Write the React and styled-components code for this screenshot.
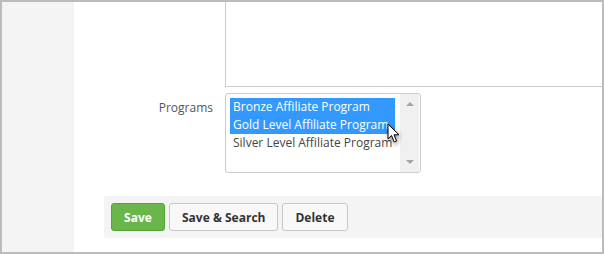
import React from 'react'
import styled, { createGlobalStyle } from 'styled-components'

const GlobalStyle = createGlobalStyle`
  html, body {
    margin: 0;
    padding: 0;
    background: #fff;
  }
  body {
    font-family: "Open Sans", "Liberation Sans", sans-serif;
  }
`

const Frame = styled.div`
  width: 604px;
  height: 254px;
  box-sizing: border-box;
  border: 2px solid #bcbcbc;
  display: flex;
  overflow: hidden;
`

const Sidebar = styled.div`
  width: 72px;
  flex: none;
  background: #f4f4f4;
`

const Main = styled.div`
  flex: 1;
  display: flex;
  flex-direction: column;
  background: #fff;
  min-width: 0;
`

const Row = styled.div`
  display: flex;
  margin-top: ${props => props.top || 0}px;
`

const Label = styled.div`
  width: 151px;
  flex: none;
  box-sizing: border-box;
  padding-right: 12px;
  padding-top: 6px;
  text-align: right;
  font-size: 12px;
  color: #555;
`

const TextArea = styled.div`
  flex: 1;
  height: 84px;
  border-left: 1px solid #cccccc;
  border-bottom: 1px solid #cccccc;
  margin-right: -4px;
`

const ListBox = styled.div`
  position: relative;
  width: 196px;
  height: 80px;
  box-sizing: border-box;
  border: 1px solid #cccccc;
  border-radius: 3px;
  display: flex;
  background: #fff;
`

const Options = styled.div`
  flex: 1;
  padding: 4px 0 0 4px;
  overflow: hidden;
`

const Option = styled.div`
  height: 18px;
  line-height: 18px;
  width: 165px;
  padding-left: 3px;
  box-sizing: border-box;
  font-size: 12px;
  white-space: nowrap;
  color: ${props => (props.selected ? '#fff' : '#444')};
  background: ${props => (props.selected ? '#3399ff' : 'transparent')};
`

const ScrollTrack = styled.div`
  width: 19px;
  flex: none;
  background: #f0f0f0;
  display: flex;
  flex-direction: column;
  justify-content: space-between;
  align-items: center;
  padding: 8px 0 8px;
  box-sizing: border-box;
  margin-right: 1px;
`

const Arrow = styled.div`
  width: 0;
  height: 0;
  border-left: 4px solid transparent;
  border-right: 4px solid transparent;
  ${props => (props.down
    ? 'border-top: 4px solid #a3a3a3;'
    : 'border-bottom: 4px solid #a3a3a3;')}
`

const Cursor = styled.svg`
  position: absolute;
  left: 161px;
  top: 29px;
  filter: drop-shadow(1px 2px 2px rgba(0, 0, 0, 0.45));
`

const ButtonBar = styled.div`
  margin: 23px -4px 0 30px;
  height: 42px;
  background: #f4f4f4;
  border-radius: 3px;
  display: flex;
  align-items: center;
  gap: 4px;
  padding-left: 7px;
`

const Button = styled.button`
  height: 28px;
  padding: 0 12px;
  box-sizing: border-box;
  border-radius: 3px;
  font-family: "Open Sans", "Liberation Sans", sans-serif;
  font-size: 12px;
  font-weight: 700;
  cursor: pointer;
  color: ${props => (props.primary ? '#fff' : '#333')};
  background: ${props => (props.primary ? '#6bb64a' : '#f8f8f8')};
  border: 1px solid ${props => (props.primary ? '#55a236' : '#c8c8c8')};
  min-width: ${props => props.min || 0}px;
`

const programs = [
  { name: 'Bronze Affiliate Program', selected: true },
  { name: 'Gold Level Affiliate Program', selected: true },
  { name: 'Silver Level Affiliate Program', selected: false }
]

export default function App () {
  return (
    <>
      <GlobalStyle />
      <Frame>
        <Sidebar />
        <Main>
          <Row>
            <Label />
            <TextArea />
          </Row>
          <Row top={6}>
            <Label>Programs</Label>
            <ListBox>
              <Options>
                {programs.map(p => (
                  <Option key={p.name} selected={p.selected}>{p.name}</Option>
                ))}
              </Options>
              <ScrollTrack>
                <Arrow />
                <Arrow down />
              </ScrollTrack>
              <Cursor width='14' height='21' viewBox='0 0 14 21'>
                <path d='M1 1 L1 16 L4.5 12.5 L7.2 19 L9.6 18 L7 11.8 L12 11.8 Z' fill='#fff' stroke='#000' strokeWidth='1' strokeLinejoin='round' />
              </Cursor>
            </ListBox>
          </Row>
          <ButtonBar>
            <Button primary min={54}>Save</Button>
            <Button min={109}>Save &amp; Search</Button>
            <Button min={65}>Delete</Button>
          </ButtonBar>
        </Main>
      </Frame>
    </>
  )
}
